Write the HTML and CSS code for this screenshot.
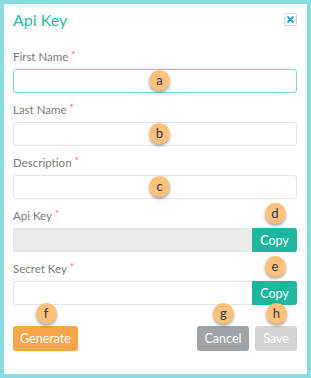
FILE: index.html
```html
<!DOCTYPE html>
<html lang="en">
<head>
    <meta charset="UTF-8">
    <title>Api Key</title>
    <link rel="stylesheet" href="styles.css">
</head>
<body>
    <div class="modal">
        <div class="modalHeader">
            <h2>Api Key</h2>
            <button class="closeBtn" type="button">
                <svg width="7" height="7" viewBox="0 0 7 7"><path d="M1 1L6 6M6 1L1 6" stroke="#1ea6dc" stroke-width="1.8" stroke-linecap="round"/></svg>
            </button>
        </div>

        <div class="field">
            <label>First Name<span class="req">*</span></label>
            <div class="inputWrap">
                <input type="text" class="focused">
                <span class="badge inBox">a</span>
            </div>
        </div>

        <div class="field">
            <label>Last Name<span class="req">*</span></label>
            <div class="inputWrap">
                <input type="text">
                <span class="badge inBox">b</span>
            </div>
        </div>

        <div class="field">
            <label>Description<span class="req">*</span></label>
            <div class="inputWrap">
                <input type="text">
                <span class="badge inBox">c</span>
            </div>
        </div>

        <div class="field">
            <label>Api Key<span class="req">*</span></label>
            <div class="inputGroup">
                <input type="text" class="readonly" readonly>
                <div class="copyWrap">
                    <span class="badge above">d</span>
                    <button type="button" class="copyBtn">Copy</button>
                </div>
            </div>
        </div>

        <div class="field">
            <label>Secret Key<span class="req">*</span></label>
            <div class="inputGroup">
                <input type="text">
                <div class="copyWrap">
                    <span class="badge above">e</span>
                    <button type="button" class="copyBtn">Copy</button>
                </div>
            </div>
        </div>

        <div class="actions">
            <div class="btnWrap">
                <span class="badge above">f</span>
                <button type="button" class="btn generate">Generate</button>
            </div>
            <div class="rightBtns">
                <div class="btnWrap">
                    <span class="badge above">g</span>
                    <button type="button" class="btn cancel">Cancel</button>
                </div>
                <div class="btnWrap">
                    <span class="badge above">h</span>
                    <button type="button" class="btn save" disabled>Save</button>
                </div>
            </div>
        </div>
    </div>
</body>
</html>
```

FILE: styles.css
```css
html, body {
    margin: 0;
    padding: 0;
}
body {
    background: #8adbe0;
    padding: 4px;
    font-family: Lato, "Open Sans", sans-serif;
}
.modal {
    background: #fff;
    height: 370px;
    box-sizing: border-box;
    padding: 6px 10px 0 9px;
}
.modalHeader {
    display: flex;
    justify-content: space-between;
    align-items: center;
    margin-bottom: 18px;
}
.modalHeader h2 {
    margin: 0;
    font-size: 16px;
    line-height: 20px;
    font-weight: normal;
    color: #2bbca6;
}
.closeBtn {
    width: 13px;
    height: 13px;
    padding: 0;
    border: 1px solid #cfd6d8;
    border-radius: 2px;
    background: #fff;
    display: flex;
    align-items: center;
    justify-content: center;
    margin-top: -2px;
}
.field {
    margin-bottom: 8px;
}
label {
    display: block;
    font-size: 11.5px;
    line-height: 17px;
    color: #7a7a7a;
    margin-bottom: 4px;
}
.req {
    color: #ef5a66;
    font-size: 10px;
    vertical-align: top;
    line-height: 13px;
    margin-left: 3px;
}
.inputWrap {
    position: relative;
}
input[type="text"] {
    display: block;
    width: 100%;
    height: 24px;
    box-sizing: border-box;
    border: 1px solid #e2e4e5;
    border-radius: 3px;
    background: #fff;
    font-family: inherit;
    font-size: 12px;
    outline: none;
}
input.focused {
    border-color: #7fd4dc;
}
input.readonly {
    background: #e9e9e9;
}
.inputGroup {
    display: flex;
}
.inputGroup input[type="text"] {
    flex: 1;
    border-radius: 3px 0 0 3px;
    border-right: none;
}
.copyWrap {
    position: relative;
}
.copyBtn {
    width: 45px;
    height: 24px;
    border: none;
    border-radius: 0 3px 3px 0;
    background: #1eb79e;
    color: #fff;
    font-family: inherit;
    font-size: 12.5px;
    padding: 0;
}
.badge {
    position: absolute;
    width: 21px;
    height: 21px;
    border-radius: 50%;
    background: #fdc17c;
    color: #2f3650;
    font-size: 13px;
    line-height: 20px;
    text-align: center;
    box-shadow: 0 2px 3px rgba(0, 0, 0, 0.35);
}
.badge.inBox {
    left: 136px;
    top: 1px;
}
.badge.above {
    left: 50%;
    margin-left: -10px;
    top: -25px;
}
.actions {
    display: flex;
    justify-content: space-between;
    margin-top: 21px;
}
.rightBtns {
    display: flex;
    gap: 6px;
}
.btnWrap {
    position: relative;
}
.btnWrap .badge.above {
    top: -23px;
}
.btn {
    height: 25px;
    border: none;
    border-radius: 3px;
    color: #fff;
    font-family: inherit;
    font-size: 12.5px;
    padding: 0;
}
.generate {
    width: 65px;
    background: #f9a54a;
}
.cancel {
    width: 52px;
    background: #9da3a7;
}
.save {
    width: 42px;
    background: #d4d4d4;
}
```
